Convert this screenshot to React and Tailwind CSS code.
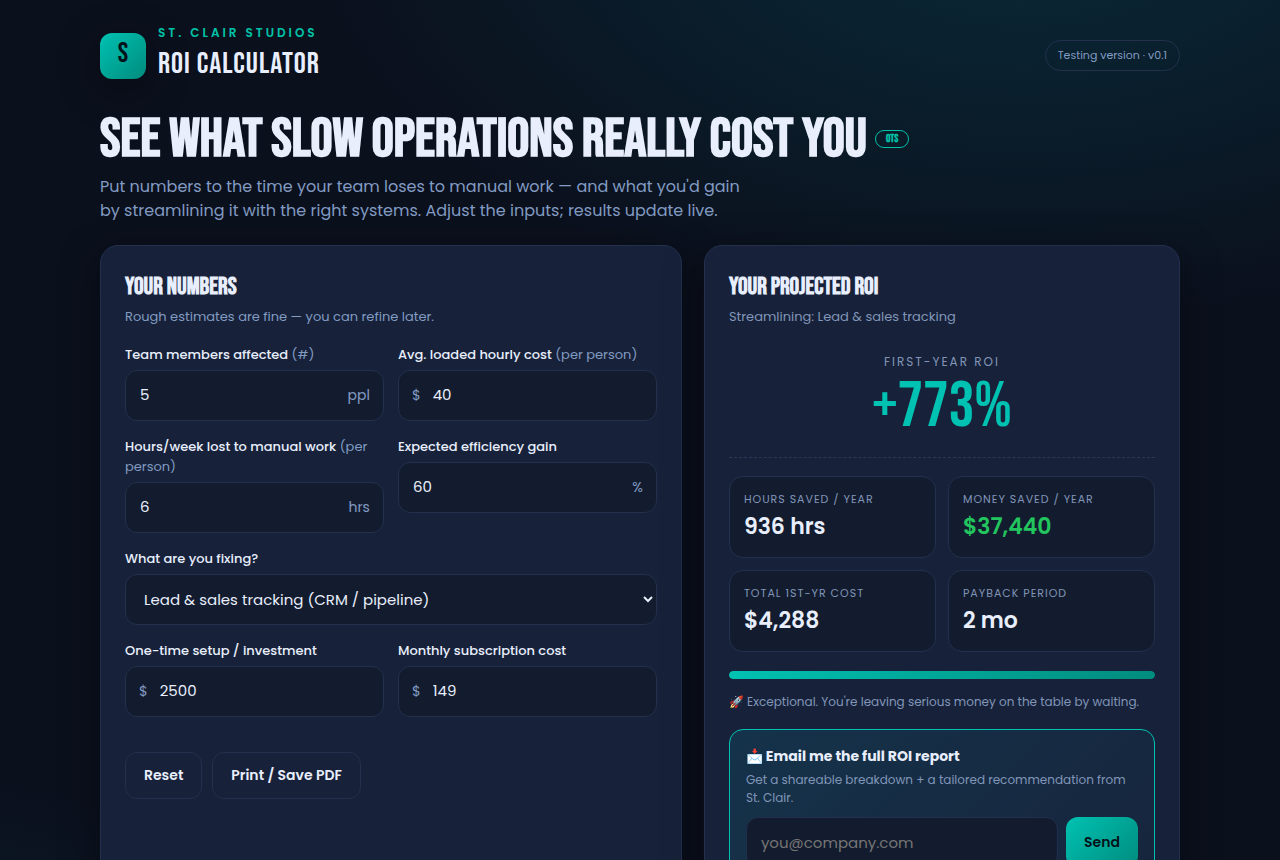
import { useState } from "react";

const DISPLAY = "font-['Bebas_Neue','Roboto_Condensed','Liberation_Sans_Narrow',sans-serif]";

const AREAS = [
  { id: "sales", label: "Lead & sales tracking (CRM / pipeline)", short: "Lead & sales tracking" },
  { id: "ops", label: "Scheduling & dispatch", short: "Scheduling & dispatch" },
  { id: "billing", label: "Invoicing & billing", short: "Invoicing & billing" },
];

const DEFAULTS = { team: "5", rate: "40", hours: "6", gain: "60", area: "sales", setup: "2500", monthly: "149" };

function Field({ id, label, hint, prefix, suffix, value, onChange }) {
  return (
    <div>
      <label htmlFor={id} className="mb-[5px] block text-[13px] leading-5 font-medium text-[#e8eefc]">
        {label} {hint && <span className="font-normal text-[#829bc2]">{hint}</span>}
      </label>
      <div className={`flex h-[51px] items-center rounded-xl border border-[#22304d] bg-[#131c2e] pr-[13px] text-[15px] focus-within:border-[#00c2b2] ${prefix ? "pl-[13px]" : "pl-3.5"}`}>
        {prefix && <span className="mr-3 text-[14px] text-[#829bc2]">{prefix}</span>}
        <input
          id={id}
          inputMode="decimal"
          value={value}
          onChange={(e) => onChange(e.target.value)}
          className="min-w-0 flex-1 bg-transparent text-[#e8eefc] outline-none"
        />
        {suffix && <span className="text-[14px] text-[#829bc2]">{suffix}</span>}
      </div>
    </div>
  );
}

function Tile({ label, value, tone = "text-[#e8eefc]" }) {
  return (
    <div className="h-[82px] rounded-[14px] border border-[#22304d] bg-[#131c2e] px-3.5 py-3">
      <div className="text-[11px] leading-5 tracking-[1px] text-[#8195b8] uppercase">{label}</div>
      <div className={`mt-0.5 text-[22px] leading-8 font-semibold ${tone}`}>{value}</div>
    </div>
  );
}

export default function App() {
  const [form, setForm] = useState(DEFAULTS);
  const [email, setEmail] = useState("");
  const set = (key) => (value) => setForm((f) => ({ ...f, [key]: value }));
  const n = (key) => Number(form[key]) || 0;

  const hours = Math.round((n("team") * n("hours") * 52 * n("gain")) / 100);
  const money = hours * n("rate");
  const cost = n("setup") + n("monthly") * 12;
  const roi = cost > 0 ? Math.round(((money - cost) / cost) * 100) : 0;
  const payback = money > 0 ? Math.ceil(cost / (money / 12)) : 0;
  const area = AREAS.find((a) => a.id === form.area);
  const usd = (v) => "$" + Math.round(v).toLocaleString("en-US");

  return (
    <div className="min-h-screen bg-[#0b101d] bg-[radial-gradient(1200px_700px_at_80%_-10%,rgba(0,174,194,0.17),transparent_60%),radial-gradient(900px_500px_at_-10%_110%,rgba(0,174,194,0.1),transparent_60%)] font-['Poppins','Open_Sans',sans-serif] text-[#e8eefc]">
      <div className="mx-auto max-w-[1120px] px-5 pt-6 pb-16">
        <header className="flex items-center justify-between">
          <div className="flex items-center gap-3">
            <div className={`${DISPLAY} flex size-[46px] items-center justify-center rounded-xl bg-linear-135 from-[#00c2b2] to-[#008c7e] pb-[3px] text-[28px] text-[#04121a] shadow-[0_10px_40px_rgba(0,0,0,0.4)]`}>S</div>
            <div>
              <div className="text-[12px] leading-[18px] font-semibold tracking-[3px] text-[#00c2a8] uppercase">St. Clair Studios</div>
              <div className={`${DISPLAY} text-[30px] leading-[45px] tracking-[1px]`}>ROI CALCULATOR</div>
            </div>
          </div>
          <div className="rounded-full border border-[#22304d] px-3 py-1.5 text-[11px] leading-[17px] text-[#829bc2]">Testing version · v0.1</div>
        </header>

        <section className="mt-[26px]">
          <h1 className={`${DISPLAY} flex items-center gap-2 text-[55px] leading-[54px] font-bold`}>
            SEE WHAT SLOW OPERATIONS REALLY COST YOU
            <span className="mb-0.5 rounded-full border border-[#00c2a8] px-2.5 text-[11px] leading-4 text-[#00c2a8]">OTS</span>
          </h1>
          <p className="mt-2 max-w-[660px] text-[16px] leading-6 text-[#829bc2]">
            Put numbers to the time your team loses to manual work — and what you'd gain by streamlining it with the right systems. Adjust the inputs; results update live.
          </p>
        </section>

        <main className="mt-[22px] grid grid-cols-[minmax(0,1.1fr)_minmax(0,0.9fr)] gap-[22px]">
          <section className="rounded-[18px] border border-[#22304d] bg-[#17223a] p-6 shadow-[0_10px_40px_rgba(0,0,0,0.4)]">
            <h2 className={`${DISPLAY} text-[24px] leading-[33px] font-bold`}>YOUR NUMBERS</h2>
            <p className="mt-1 text-[13px] leading-5 text-[#829bc2]">Rough estimates are fine — you can refine later.</p>
            <div className="mt-[18px] grid grid-cols-2 gap-x-3.5 gap-y-4">
              <Field id="team" label="Team members affected" hint="(#)" suffix="ppl" value={form.team} onChange={set("team")} />
              <Field id="rate" label="Avg. loaded hourly cost" hint="(per person)" prefix="$" value={form.rate} onChange={set("rate")} />
              <Field id="hours" label="Hours/week lost to manual work" hint="(per person)" suffix="hrs" value={form.hours} onChange={set("hours")} />
              <Field id="gain" label="Expected efficiency gain" suffix="%" value={form.gain} onChange={set("gain")} />
              <div className="col-span-2">
                <label htmlFor="area" className="mb-[5px] block text-[13px] leading-5 font-medium">What are you fixing?</label>
                <select
                  id="area"
                  value={form.area}
                  onChange={(e) => set("area")(e.target.value)}
                  className="h-[51px] w-full rounded-xl border border-[#22304d] bg-[#131c2e] pl-3.5 text-[15px] text-[#e8eefc]"
                >
                  {AREAS.map((a) => <option key={a.id} value={a.id}>{a.label}</option>)}
                </select>
              </div>
              <Field id="setup" label="One-time setup / investment" prefix="$" value={form.setup} onChange={set("setup")} />
              <Field id="monthly" label="Monthly subscription cost" prefix="$" value={form.monthly} onChange={set("monthly")} />
            </div>
            <div className="mt-[35px] flex gap-2.5">
              <button type="button" onClick={() => setForm(DEFAULTS)} className="h-[47px] rounded-xl border border-[#22304d] px-[18px] text-[14px] font-semibold">Reset</button>
              <button type="button" onClick={() => window.print()} className="h-[47px] rounded-xl border border-[#22304d] px-[18px] text-[14px] font-semibold">Print / Save PDF</button>
            </div>
          </section>

          <section className="rounded-[18px] border border-[#22304d] bg-[#17223a] p-6 shadow-[0_10px_40px_rgba(0,0,0,0.4)]">
            <h2 className={`${DISPLAY} text-[24px] leading-[33px] font-bold`}>YOUR PROJECTED ROI</h2>
            <p className="mt-1 text-[13px] leading-5 text-[#8195b8]">Streamlining: {area.short}</p>
            <div className="mt-[25px] border-b border-dashed border-[#2a3857] pb-[18px] text-center">
              <div className="text-[12px] leading-5 tracking-[2px] text-[#8195b8] uppercase">First-year ROI</div>
              <div className={`${DISPLAY} mt-[3px] text-[64px] leading-[64px] text-[#00c2b2]`}>{roi >= 0 ? "+" : ""}{roi}%</div>
            </div>
            <div className="mt-[18px] grid grid-cols-2 gap-3">
              <Tile label="Hours saved / year" value={`${hours.toLocaleString("en-US")} hrs`} />
              <Tile label="Money saved / year" value={usd(money)} tone="text-[#22c55e]" />
              <Tile label="Total 1st-yr cost" value={usd(cost)} />
              <Tile label="Payback period" value={`${payback} mo`} />
            </div>
            <div className="mt-[19px] h-2 overflow-hidden rounded-full bg-[#131c2e]">
              <div className="h-full rounded-full bg-linear-135 from-[#00c2b2] to-[#008c7e]" style={{ width: `${Math.max(0, Math.min(100, roi / 3))}%` }} />
            </div>
            <p className="mt-3.5 text-[12px] leading-[18px] text-[#8195b8]">🚀 Exceptional. You're leaving serious money on the table by waiting.</p>
            <form onSubmit={(e) => e.preventDefault()} className="mt-[18px] rounded-[14px] border border-[#00c2b2] bg-linear-135 from-[#00aec2]/12 to-[#00aec2]/2 p-4">
              <h3 className="text-[14px] leading-[21px] font-bold">📩 Email me the full ROI report</h3>
              <p className="mt-1 text-[12px] leading-[18px] text-[#8195b8]">Get a shareable breakdown + a tailored recommendation from St. Clair.</p>
              <div className="mt-2.5 flex gap-2">
                <input
                  type="email"
                  aria-label="Email address"
                  placeholder="you@company.com"
                  value={email}
                  onChange={(e) => setEmail(e.target.value)}
                  className="h-[51px] min-w-0 flex-1 rounded-xl border border-[#22304d] bg-[#131c2e] px-3.5 text-[15px] text-[#e8eefc] outline-none placeholder:text-[#757575]"
                />
                <button type="submit" className="h-[51px] rounded-xl bg-linear-135 from-[#00c2b2] to-[#008c7e] px-[18px] text-[14px] font-semibold text-[#04121a]">Send</button>
              </div>
            </form>
          </section>
        </main>
      </div>
    </div>
  );
}
